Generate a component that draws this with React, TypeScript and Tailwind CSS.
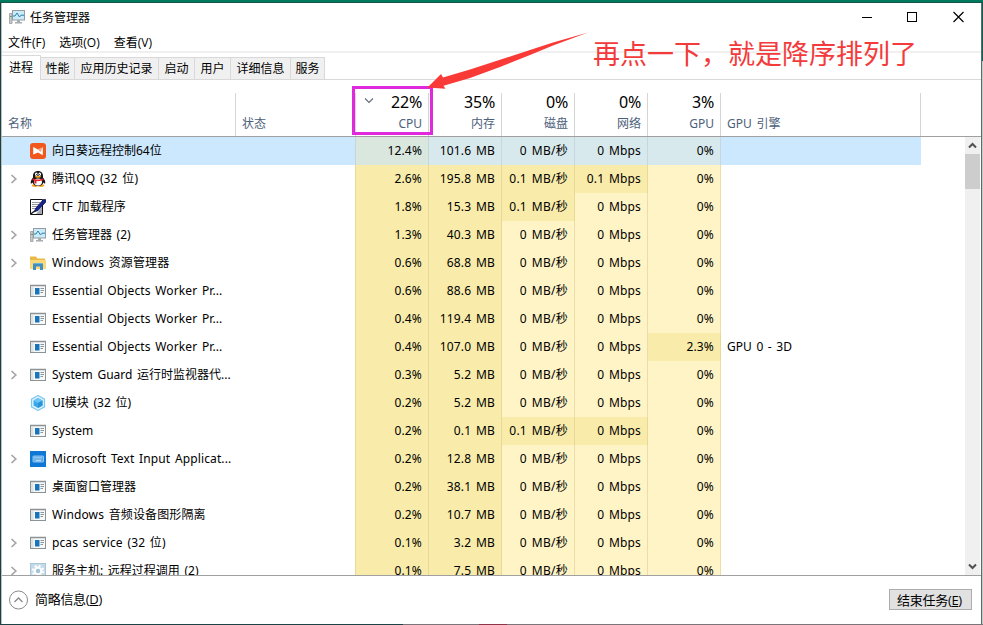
import React from "react";

type Kind = "sun" | "qq" | "ctf" | "monitor" | "folder" | "app" | "hex" | "keyboard" | "gear";
type Row = {
  icon: Kind;
  name: string;
  expand?: boolean;
  track?: string;
  v: [string, string, string, string, string];
  hot?: number[];
  engine?: string;
};

const EO = "Essential Objects Worker Pr...";

const rows: Row[] = [
  { icon: "sun", name: "向日葵远程控制64位", track: "tracking-normal", v: ["12.4%", "101.6 MB", "0 MB/秒", "0 Mbps", "0%"] },
  { icon: "qq", name: "腾讯QQ (32 位)", expand: true, v: ["2.6%", "195.8 MB", "0.1 MB/秒", "0.1 Mbps", "0%"], hot: [2, 3] },
  { icon: "ctf", name: "CTF 加载程序", v: ["1.8%", "15.3 MB", "0.1 MB/秒", "0 Mbps", "0%"], hot: [2] },
  { icon: "monitor", name: "任务管理器 (2)", expand: true, track: "tracking-normal", v: ["1.3%", "40.3 MB", "0 MB/秒", "0 Mbps", "0%"] },
  { icon: "folder", name: "Windows 资源管理器", expand: true, v: ["0.6%", "68.8 MB", "0 MB/秒", "0 Mbps", "0%"] },
  { icon: "app", name: EO, v: ["0.6%", "88.6 MB", "0 MB/秒", "0 Mbps", "0%"] },
  { icon: "app", name: EO, v: ["0.4%", "119.4 MB", "0 MB/秒", "0 Mbps", "0%"] },
  { icon: "app", name: EO, v: ["0.4%", "107.0 MB", "0 MB/秒", "0 Mbps", "2.3%"], hot: [4], engine: "GPU 0 - 3D" },
  { icon: "app", name: "System Guard 运行时监视器代...", expand: true, track: "tracking-normal", v: ["0.3%", "5.2 MB", "0 MB/秒", "0 Mbps", "0%"] },
  { icon: "hex", name: "UI模块 (32 位)", track: "tracking-normal", v: ["0.2%", "5.2 MB", "0 MB/秒", "0 Mbps", "0%"] },
  { icon: "app", name: "System", v: ["0.2%", "0.1 MB", "0.1 MB/秒", "0 Mbps", "0%"], hot: [2, 3] },
  { icon: "keyboard", name: "Microsoft Text Input Applicat...", expand: true, v: ["0.2%", "12.8 MB", "0 MB/秒", "0 Mbps", "0%"] },
  { icon: "app", name: "桌面窗口管理器", track: "tracking-normal", v: ["0.2%", "38.1 MB", "0 MB/秒", "0 Mbps", "0%"] },
  { icon: "app", name: "Windows 音频设备图形隔离", v: ["0.2%", "10.7 MB", "0 MB/秒", "0 Mbps", "0%"] },
  { icon: "app", name: "pcas service (32 位)", expand: true, v: ["0.1%", "3.2 MB", "0 MB/秒", "0 Mbps", "0%"] },
  { icon: "gear", name: "服务主机: 远程过程调用 (2)", expand: true, track: "tracking-normal", v: ["0.1%", "7.5 MB", "0 MB/秒", "0 Mbps", "0%"] },
];

function Icon({ kind }: { kind: Kind }) {
  const p = { width: 16, height: 16, viewBox: "0 0 16 16", className: "block shrink-0" };
  switch (kind) {
    case "sun":
      return (
        <svg {...p}>
          <rect width="16" height="16" rx="3" fill="#f0581c" />
          <path d="M3.200 4 8 6.500 12.800 4.200V12.200L8 9.500 3.200 11.500Z" fill="#fff" />
          <path d="M8 6.500 12.800 4.200 10.500 9Z" fill="#f9a27c" />
        </svg>
      );
    case "qq":
      return (
        <svg {...p}>
          <ellipse cx="5" cy="14.6" rx="3.3" ry="1.4" fill="#f5a623" />
          <ellipse cx="11" cy="14.6" rx="3.3" ry="1.4" fill="#f5a623" />
          <path d="M8 0C4.600 0 3 2.200 3 5v1.500C1.500 8.500.2 10.500.8 12.300c.5.8 1.300-.3 1.700-.8C3.200 14 5.500 15 8 15s4.800-1 5.500-3.500c.4.5 1.200 1.600 1.700.8C15.800 10.500 14.500 8.500 13 6.500V5C13 2.200 11.400 0 8 0Z" fill="#17171b" />
          <ellipse cx="8" cy="11" rx="4" ry="3.4" fill="#fff" />
          <ellipse cx="6.300" cy="3.200" rx="1.300" ry="1.700" fill="#fff" />
          <ellipse cx="9.700" cy="3.200" rx="1.300" ry="1.700" fill="#fff" />
          <circle cx="6.700" cy="3.500" r=".6" />
          <circle cx="9.300" cy="3.500" r=".6" />
          <ellipse cx="8" cy="5.800" rx="3" ry="1" fill="#f7a928" />
          <path d="M2.800 7.200c3 1.700 7.400 1.700 10.400 0l.4 1.900C11 10.200 8 10.400 6.500 10.100v2.300H4.400V9.500L2.400 8.900Z" fill="#e2232b" />
        </svg>
      );
    case "ctf":
      return (
        <svg {...p}>
          <path d="M.5.500H12.500V15.500H.5Z" fill="#fff" stroke="#111" />
          <path d="M2.500 3.500H10M2.500 5.500H9M2.500 7.500H8M2.500 9.500H6" stroke="#333" strokeDasharray="1 1" />
          <path d="M6 15H12V8Z" fill="#a4a8b4" />
          <path d="M13.500.300 16 .8 15.800 3 8 11.500 4.500 12.800 5.500 9.500Z" fill="#17248c" stroke="#0a0f4a" strokeWidth=".7" />
          <path d="M1 14.800 5 11.800" stroke="#111" strokeWidth="1.300" />
        </svg>
      );
    case "monitor":
      return (
        <svg {...p}>
          <path d="M.5 4.500H3V14.500H.5Z" fill="#c9c9c9" stroke="#9b9b9b" strokeWidth=".8" />
          <path d="M1 7.500H3" stroke="#62a56b" />
          <rect x="3.500" y="1.500" width="12" height="9.500" fill="#c9ebfa" stroke="#929ba1" />
          <path d="M4 7H6L8 4 10.500 8 12 6.200H15" fill="none" stroke="#2e81aa" strokeWidth="1" />
          <path d="M8 11h3v2h2v1.500H6V13h2Z" fill="#a6acaf" />
        </svg>
      );
    case "folder":
      return (
        <svg {...p}>
          <path d="M0 1.500H6L7.500 3.500H15V14H0Z" fill="#e9b949" />
          <path d="M0 5H16V14H0Z" fill="#fbd978" />
          <path d="M3 15V9.500Q3 8 4.500 8H11.500Q13 8 13 9.500V15H10V11.500H6V15Z" fill="#3f8fc4" />
          <path d="M3.500 8.500H12.500" stroke="#66b5df" />
        </svg>
      );
    case "app":
      return (
        <svg {...p}>
          <rect x=".5" y="2.500" width="15" height="11" fill="#f7f8f8" stroke="#8c9397" />
          <path d="M0 2.500H16" stroke="#8b9195" strokeWidth="1.500" />
          <path d="M1 4H3.500V13H1Z" fill="#dfe2e3" />
          <rect x="5" y="5" width="4.500" height="6.500" fill="#1874bd" />
          <path d="M10.500 5.500H14M10.500 7.500H14M10.500 9.500H13" stroke="#8b9498" />
        </svg>
      );
    case "hex":
      return (
        <svg {...p}>
          <path d="M8 .6 14.500 4.200V11.800L8 15.400 1.500 11.800V4.200Z" fill="#e0f4ff" stroke="#7cc8ef" strokeWidth="1.200" />
          <path d="M8 3 12.500 5.500V10.500L8 13 3.500 10.500V5.500Z" fill="#3aa8e8" />
          <path d="M8 3 12.500 5.500 8 8 3.500 5.500Z" fill="#67c6f5" />
          <path d="M8 8V13L12.500 10.500V5.500Z" fill="#2b93d8" />
        </svg>
      );
    case "keyboard":
      return (
        <svg {...p}>
          <rect width="16" height="16" fill="#0f78d7" />
          <rect x="3" y="5" width="10.500" height="6" rx=".5" fill="#54a5e8" stroke="#a8d3f6" strokeWidth=".8" />
          <path d="M4.500 6.500H12.500M4.500 8H12.500" stroke="#c5e1f8" strokeDasharray="1 1" />
          <path d="M5.500 9.700H11" stroke="#c5e1f8" />
        </svg>
      );
    case "gear":
      return (
        <svg {...p}>
          <rect x=".5" y=".5" width="15" height="15" fill="#c3dbe9" stroke="#a9c6d8" />
          <circle cx="8" cy="8" r="5.200" fill="none" stroke="#fff" strokeWidth="2" strokeDasharray="2.040 2.040" />
          <circle cx="8" cy="8" r="3.300" fill="#9fc3da" stroke="#fff" strokeWidth="2.200" />
        </svg>
      );
  }
}

function cellColor(selected: boolean, col: number, hot: boolean) {
  if (selected) return col === 0 ? "bg-[#d9e7df] border-[#c6d6d6]" : "bg-[#d8e9ed] border-[#c6d8df]";
  if (col < 2 || hot) return "bg-[#f9ecaa] border-[#e9d999]";
  return "bg-[#fff4c5] border-[#ecdda6]";
}

function ProcessRow({ row, selected }: { row: Row; selected: boolean }) {
  return (
    <div className={"flex h-7 w-[919px] shrink-0 items-center [word-spacing:1.500px] " + (selected ? "bg-[#cce8ff]" : "")}>
      <div className="flex w-[353px] shrink-0 items-center">
        <div className="flex w-7 items-center pl-2">
          {row.expand && (
            <svg width="8" height="10" viewBox="0 0 8 10" fill="none" stroke="#a6a6a6" strokeWidth="1.700">
              <path d="M1.500 1 5.800 5 1.500 9" />
            </svg>
          )}
        </div>
        <Icon kind={row.icon} />
        <span className={"ml-1.5 " + (row.track ?? "tracking-[0.11px]")}>{row.name}</span>
      </div>
      {row.v.map((v, i) => (
        <div
          key={i}
          className={
            "flex h-7 shrink-0 items-center justify-end border-r pr-[6px] " +
            (i === 0 ? "w-[74px] border-l " : "w-[73px] ") +
            (i === 2 ? "tracking-[0.25px] " : "tracking-[0.15px] ") +
            cellColor(selected, i, !!row.hot?.includes(i))
          }
        >
          {v}
        </div>
      ))}
      <span className="pl-[6px]">{row.engine}</span>
    </div>
  );
}

const tabs: [string, string][] = [
  ["性能", "w-[34px]"],
  ["应用历史记录", "w-[84px]"],
  ["启动", "w-[36px]"],
  ["用户", "w-[36px]"],
  ["详细信息", "w-[60px]"],
  ["服务", "w-[34px]"],
];

const heads: [string, string][] = [
  ["22%", "CPU"],
  ["35%", "内存"],
  ["0%", "磁盘"],
  ["0%", "网络"],
  ["3%", "GPU"],
];

export default function App() {
  return (
    <div className="relative flex h-[625px] w-[983px] flex-col overflow-hidden bg-white font-['Noto_Sans','Noto_Sans_CJK_SC',sans-serif] text-[12px] leading-[16px] whitespace-pre text-black">
      <div className="h-[3px] shrink-0 border-b border-[#14584b] bg-[#007a5e]" />
      <div className="flex min-h-0 flex-1">
        <div className="w-[2px] shrink-0 border-r border-[#b4c1c1] bg-[#203d40]" />
        <div className="flex min-w-0 flex-1 flex-col">
          <header className="flex h-7 shrink-0 items-center pr-[2px] pl-[7px]">
            <Icon kind="monitor" />
            <span className="ml-[5px] flex-1 pt-px">任务管理器</span>
            <svg width="120" height="28" viewBox="0 0 120 28" fill="none" stroke="#000">
              <path d="M3 14.500H13" />
              <rect x="48.500" y="9.500" width="9" height="9" />
              <path d="M94.500 9 104.500 19M104.500 9 94.500 19" strokeWidth="1.150" />
            </svg>
          </header>
          <nav className="flex h-[20px] shrink-0 items-center gap-[14px] pl-1.5 pt-1 font-['Open_Sans','Noto_Sans_CJK_SC',sans-serif]">
            <span>文件(F)</span>
            <span>选项(O)</span>
            <span>查看(V)</span>
          </nav>
          <div className="flex h-[29px] shrink-0 items-end border-t-2 border-b border-t-[#f0f0f0] border-b-[#d9d9d9]">
            <div className="-mb-px flex h-[25px] w-[39px] shrink-0 items-center justify-center border-t border-r border-[#d9d9d9] bg-white pb-[1px]">进程</div>
            {tabs.map(([t, w]) => (
              <div key={t} className={"flex h-[22px] shrink-0 items-center justify-center border-t border-r border-[#d9d9d9] bg-[#f0f0f0] pt-px " + w}>
                {t}
              </div>
            ))}
          </div>
          <section className="flex h-[57px] shrink-0 items-end border-b border-[#a0a0a0] text-[#4c607a]">
            <div className="flex h-[43px] w-[234px] items-end border-r border-[#d5d5d5] pb-1 pl-1.5">名称</div>
            <div className="flex h-[43px] w-[119px] items-end pb-1 pl-1.5">状态</div>
            {heads.map(([n, t], i) => (
              <div key={t} className={"flex h-[43px] items-end justify-end border-r border-[#d5d5d5] pr-[6px] pb-1 " + (i === 0 ? "w-[74px] border-l" : "w-[73px]")}>
                {i === 0 && (
                  <svg className="mr-auto mb-[27px] ml-[8px]" width="10" height="8" viewBox="0 0 10 8" fill="none" stroke="#5f6b7a" strokeWidth="1.100">
                    <path d="M1 1.500 5 5.500 9 1.500" />
                  </svg>
                )}
                <div className="flex flex-col items-end">
                  <span className="mb-[4px] text-[16px] leading-[20px] tracking-[-0.2px] text-black">{n}</span>
                  <span>{t}</span>
                </div>
              </div>
            ))}
            <div className="flex h-[43px] w-[200px] items-end border-r border-[#d5d5d5] pb-1 pl-[6px] [word-spacing:1.500px]">GPU 引擎</div>
          </section>
          <main className="flex h-[438px] shrink-0 justify-between overflow-hidden pr-px">
            <div className="flex flex-col">
              {rows.map((r, i) => (
                <ProcessRow key={i} row={r} selected={i === 0} />
              ))}
            </div>
            <div className="flex w-[15px] flex-col items-center justify-between bg-[#f0f0f0]">
              <div className="flex w-full flex-col items-center">
                <svg width="15" height="17" viewBox="0 0 15 17" fill="none" stroke="#505050" strokeWidth="2">
                  <path d="M4 10.500 7.500 7 11 10.500" />
                </svg>
                <div className="h-[35px] w-[15px] bg-[#cdcdcd]" />
              </div>
              <svg width="15" height="17" viewBox="0 0 15 17" fill="none" stroke="#505050" strokeWidth="2">
                <path d="M4 6.500 7.500 10 11 6.500" />
              </svg>
            </div>
          </main>
          <footer className="flex h-[49px] shrink-0 items-center border-t border-[#a0a0a0] pl-[7px] pr-[9px] font-['Open_Sans','Noto_Sans_CJK_SC',sans-serif]">
            <svg className="-mt-px" width="20" height="20" viewBox="0 0 20 20" fill="none" stroke="#8a8a8a">
              <circle cx="9.500" cy="10" r="9" />
              <path d="M5.500 12 9.500 8 13.500 12" strokeWidth="1.300" />
            </svg>
            <span className="ml-[6px] flex-1 pb-[2px] text-[13px] tracking-[-0.3px]">简略信息(<u>D</u>)</span>
            <div className="-mt-px flex h-[21px] w-[83px] items-center justify-center border border-[#adadad] bg-[#e1e1e1] pr-[2px] text-[13px] tracking-[-0.3px]">
              结束任务(<u>E</u>)
            </div>
          </footer>
        </div>
        <div className="flex w-[2px] shrink-0 flex-col border-l border-[#5c6a6a] bg-[#c4cccb]">
          <div className="h-[58px] bg-[#146054]" />
        </div>
      </div>
      <div className="flex h-px shrink-0 bg-[#7b7478]">
        <div className="w-[403px] bg-[#1b4244]" />
        <div className="ml-[76px] w-[28px] bg-[#8f3349]" />
      </div>
      <div className="absolute top-[86px] left-[352px] h-[49px] w-[81px] border-[3px] border-[#e028dc]" />
      <svg className="absolute top-[30px] left-[426px]" width="165" height="62" viewBox="426 30 165 62">
        <path d="M588 32.500 553 42.500 530 50 500 59.800 470 69.500 443 77.500 441 74 427.500 87.500 445.500 88.800 443.500 85.800 470 78 500 67 530 55 553 45.500Z" fill="#f93a37" />
      </svg>
      <div className="absolute top-[35px] left-[593px] font-['Noto_Sans_CJK_SC',sans-serif] text-[27px] leading-[36px] text-[#f33b3b]">再点一下，就是降序排列了</div>
    </div>
  );
}
